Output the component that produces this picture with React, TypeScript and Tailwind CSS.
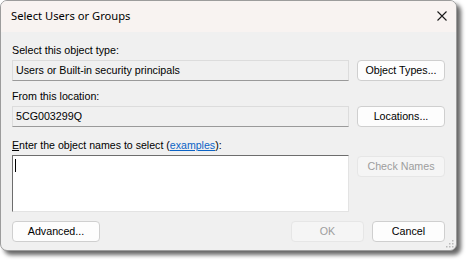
const body = { fontFamily: '"Liberation Sans", Arial, sans-serif' };

const Btn = ({ label, disabled, className = "" }: { label: string; disabled?: boolean; className?: string }) => (
  <div
    className={`h-[21px] flex items-center justify-center rounded-[4px] border text-[10.7px] ${
      disabled ? "bg-[#f5f5f5] border-[#e6e6e6] text-[#9d9d9d]" : "bg-[#fdfdfd] border-[#cfcfcf] text-black"
    } ${className}`}
  >
    {label}
  </div>
);

const Field = ({ value }: { value: string }) => (
  <div className="h-[21px] flex items-center pl-[3px] bg-[#f0f0f0] border border-[#dcdcdc] border-b-[#9a9a9a] text-[10.7px] text-black">
    {value}
  </div>
);

export default function App() {
  return (
    <div className="w-[473px] h-[267px] bg-white" style={body}>
      <div className="w-[457px] h-[251px] flex flex-col rounded-[7px] border border-[#9c9c9c] bg-[#f0f0f0] shadow-[4px_4px_4px_rgba(0,0,0,0.6)] overflow-hidden">
        <div className="h-[31px] shrink-0 flex items-center justify-between pl-[10px] pr-[9px] bg-[#f8f3f1]">
          <span className="text-[11.2px] text-black" style={{ fontFamily: '"Noto Sans", "Open Sans", sans-serif' }}>
            Select Users or Groups
          </span>
          <svg width="10" height="10" viewBox="0 0 10 10" className="mt-[-1px]">
            <path d="M0.5 0.5L9.5 9.5M9.5 0.5L0.5 9.5" stroke="#1a1a1a" strokeWidth="1.1" />
          </svg>
        </div>
        <div className="flex flex-col px-[11px] relative flex-1">
          <div className="mt-[11px] h-[14px] text-[10.7px] leading-[14px] text-black">Select this object type:</div>
          <div className="mt-[3px] grid grid-cols-[337px_88px] gap-x-[8px]">
            <Field value="Users or Built-in security principals" />
            <Btn label="Object Types..." />
          </div>
          <div className="mt-[8px] h-[14px] text-[10.7px] leading-[14px] text-black">From this location:</div>
          <div className="mt-[3px] grid grid-cols-[337px_88px] gap-x-[8px]">
            <Field value="5CG003299Q" />
            <Btn label="Locations..." />
          </div>
          <div className="mt-[11px] h-[14px] text-[10.6px] leading-[14px] text-black">
            <span className="underline">E</span>nter the object names to select (
            <span className="text-[#0b63c5] underline">examples</span>):
          </div>
          <div className="mt-[3px] grid grid-cols-[337px_88px] gap-x-[8px] items-start">
            <div className="h-[57px] bg-white border border-[#6d6d6d] border-r-[#e3e3e3] border-b-[#e3e3e3] pl-[2px] pt-[3px]">
              <div className="w-[1px] h-[13px] bg-black" />
            </div>
            <Btn label="Check Names" disabled className="mt-[1px]" />
          </div>
          <div className="mt-[9px] flex items-center">
            <Btn label="Advanced..." className="w-[88px]" />
            <div className="flex-1" />
            <Btn label="OK" disabled className="w-[73px]" />
            <Btn label="Cancel" className="w-[73px] ml-[8px]" />
          </div>
          <svg width="8" height="8" viewBox="0 0 8 8" className="absolute right-[2px] bottom-[2px]">
            <g fill="#b9b9b9">
              <rect x="6" y="0" width="1.5" height="1.5" />
              <rect x="3" y="3" width="1.5" height="1.5" />
              <rect x="6" y="3" width="1.5" height="1.5" />
              <rect x="0" y="6" width="1.5" height="1.5" />
              <rect x="3" y="6" width="1.5" height="1.5" />
              <rect x="6" y="6" width="1.5" height="1.5" />
            </g>
          </svg>
        </div>
      </div>
    </div>
  );
}
